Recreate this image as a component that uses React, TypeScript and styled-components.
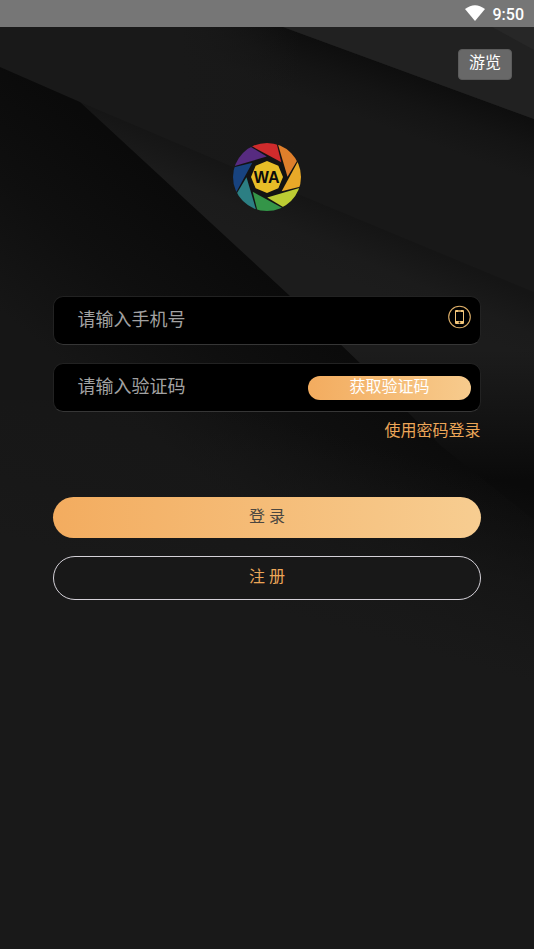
import React from "react";
import styled, { createGlobalStyle } from "styled-components";

const GlobalStyle = createGlobalStyle`
  *, *::before, *::after { box-sizing: border-box; }
  body {
    margin: 0;
    background: #191919;
    font-family: Roboto, "Noto Sans CJK SC", sans-serif;
  }
  button, input { font: inherit; }
`;

const Page = styled.div`
  position: relative;
  isolation: isolate;
  min-height: 100vh;
  display: flex;
  flex-direction: column;
  overflow: hidden;
`;

const BackdropSvg = styled.svg`
  position: absolute;
  z-index: -1;
  inset: 0;
  width: 100%;
  height: 100%;
`;

const StatusBar = styled.header`
  display: flex;
  align-items: center;
  justify-content: flex-end;
  gap: 8px;
  height: 27px;
  padding: 2px 10px 0 0;
  background: #767676;
  color: #fff;
  font-size: 16px;
  font-weight: 500;
  line-height: 24px;
`;

const WifiSvg = styled.svg`
  width: 20px;
  height: 16px;
  margin-bottom: 4px;
`;

const TopActions = styled.nav`
  display: flex;
  justify-content: flex-end;
  padding: 22px 22px 0;
`;

const BrowseButton = styled.button`
  width: 54px;
  height: 31px;
  padding: 0 0 4px;
  border: 1px solid #5c5c5c;
  border-radius: 4px;
  background: #686868;
  color: #fff;
  font-size: 16px;
  line-height: 24px;
  cursor: pointer;
`;

const LogoSvg = styled.svg`
  display: block;
  width: 68px;
  height: 68px;
  margin: 63px auto 0;
`;

const LoginForm = styled.form`
  display: flex;
  flex-direction: column;
  padding: 85px 10% 40px;
`;

const Fields = styled.div`
  display: flex;
  flex-direction: column;
  gap: 18px;
`;

const Field = styled.div`
  display: flex;
  align-items: flex-start;
  height: 49px;
  padding-right: 9px;
  border: 1px solid #222;
  border-bottom-color: #363636;
  border-radius: 10px;
  background: #000;
`;

const TextInput = styled.input`
  flex: 1;
  min-width: 0;
  height: 44px;
  padding: 0 0 0 23px;
  border: 0;
  outline: 0;
  background: transparent;
  color: #fff;
  font-size: 18px;
  &::placeholder { color: #a2a2a2; opacity: 1; }
`;

const PhoneSvg = styled.svg`
  flex: none;
  width: 24px;
  height: 24px;
  margin-top: 8px;
`;

const CodeButton = styled.button`
  flex: none;
  width: 39%;
  height: 24px;
  margin-top: 12px;
  padding: 0 0 2px;
  border: 0;
  border-radius: 12px;
  background: linear-gradient(90deg, #f3ac5f, #f7cb8d);
  color: #fff;
  font-size: 16px;
  line-height: 20px;
  cursor: pointer;
`;

const PasswordLink = styled.a`
  align-self: flex-end;
  margin-top: 7px;
  color: #eca658;
  font-size: 16px;
  line-height: 24px;
  text-decoration: none;
`;

const Actions = styled.div`
  display: flex;
  flex-direction: column;
  gap: 18px;
  margin-top: 54px;
`;

const ActionButton = styled.button<{ $primary?: boolean }>`
  height: ${(p) => (p.$primary ? "41px" : "44px")};
  padding: 0 0 2px;
  border: ${(p) => (p.$primary ? "0" : "1px solid #d4d1d8")};
  border-radius: 22px;
  background: ${(p) => (p.$primary ? "linear-gradient(90deg, #f3ac5f, #f7cd91)" : "#181818")};
  color: ${(p) => (p.$primary ? "#4a4640" : "#eca658")};
  font-size: 16px;
  line-height: 24px;
  cursor: pointer;
`;

const Backdrop = () => (
  <BackdropSvg viewBox="0 0 534 949" preserveAspectRatio="none" aria-hidden="true">
    <defs>
      <linearGradient id="sheetTop" gradientUnits="userSpaceOnUse" x1="408" y1="73" x2="388" y2="128">
        <stop offset="0" stopColor="#0e0e0e" />
        <stop offset="0.5" stopColor="#141414" />
        <stop offset="1" stopColor="#181818" />
      </linearGradient>
      <linearGradient id="sheetTopEdge" gradientUnits="userSpaceOnUse" x1="180" y1="0" x2="300" y2="0">
        <stop offset="0" stopColor="#191919" />
        <stop offset="1" stopColor="#191919" stopOpacity="0" />
      </linearGradient>
      <linearGradient id="sheetMiddle" gradientUnits="userSpaceOnUse" x1="330" y1="207" x2="306" y2="262">
        <stop offset="0" stopColor="#151515" />
        <stop offset="0.6" stopColor="#1b1b1b" />
        <stop offset="1" stopColor="#1c1c1c" />
      </linearGradient>
      <linearGradient id="sheetFade" gradientUnits="userSpaceOnUse" x1="400" y1="350" x2="400" y2="480">
        <stop offset="0" stopColor="#0c0c0c" stopOpacity="0" />
        <stop offset="1" stopColor="#0a0a0a" />
      </linearGradient>
      <linearGradient id="sheetLow" gradientUnits="userSpaceOnUse" x1="190" y1="200" x2="60" y2="360">
        <stop offset="0" stopColor="#0a0a0a" />
        <stop offset="0.5" stopColor="#0f0f0f" />
        <stop offset="1" stopColor="#161616" />
      </linearGradient>
      <linearGradient id="floor" gradientUnits="userSpaceOnUse" x1="320" y1="430" x2="270" y2="610">
        <stop offset="0" stopColor="#191919" stopOpacity="0" />
        <stop offset="0.5" stopColor="#181818" stopOpacity="0.7" />
        <stop offset="1" stopColor="#191919" />
      </linearGradient>
    </defs>
    <rect width="534" height="949" fill="#191919" />
    <path d="M0 27 H283 L534 119 V292 L233 167 L80 102 L0 67 Z" fill="url(#sheetTop)" />
    <path d="M0 27 H320 V205 L80 102 L0 67 Z" fill="url(#sheetTopEdge)" />
    <path d="M283 27 H534 V119 Z" fill="#212121" />
    <path d="M492 27 H534 V50 Z" fill="#272727" />
    <path d="M80 102 L233 167 L534 292 V560 H450 Z" fill="url(#sheetMiddle)" />
    <path d="M80 102 L233 167 L534 292 V560 H450 Z" fill="url(#sheetFade)" />
    <path d="M0 67 L80 102 L290 296 L361 364 L440 445 L534 520 V700 H0 Z" fill="url(#sheetLow)" />
    <rect y="400" width="534" height="549" fill="url(#floor)" />
  </BackdropSvg>
);

const bladeColors = [
  "#cf2b2c",
  "#df7f2b",
  "#e9a928",
  "#bccc33",
  "#349548",
  "#2c7f83",
  "#18437f",
  "#572b80",
];

const Logo = () => (
  <LogoSvg viewBox="-102 -102 204 204" role="img" aria-label="WA">
    <defs>
      <clipPath id="lens">
        <circle r="102" />
      </clipPath>
    </defs>
    <circle r="100" fill="#131313" />
    <g clipPath="url(#lens)">
      {bladeColors.map((color, i) => (
        <path key={color} d="M43 -44 L-56 -98 L-20 -130 L23 -124 Z" fill={color} transform={`rotate(${i * 45})`} />
      ))}
    </g>
    <path d="M0 -48 L34 -34 L48 0 L34 34 L0 48 L-34 34 L-48 0 L-34 -34 Z" fill="#e7bd27" />
    <text
      x="-1"
      y="18"
      textAnchor="middle"
      fontFamily="Liberation Sans, sans-serif"
      fontSize="48"
      fontWeight="700"
      fill="#0b0b0b"
    >
      WA
    </text>
  </LogoSvg>
);

export default function App() {
  return (
    <Page>
      <GlobalStyle />
      <Backdrop />
      <StatusBar>
        <WifiSvg viewBox="0 0 20 16" aria-hidden="true">
          <path d="M0 4 Q10 -3.6 20 4 L10 16 Z" fill="#fff" />
        </WifiSvg>
        <span>9:50</span>
      </StatusBar>
      <TopActions>
        <BrowseButton type="button">游览</BrowseButton>
      </TopActions>
      <main>
        <Logo />
        <LoginForm onSubmit={(e) => e.preventDefault()}>
          <Fields>
            <Field>
              <TextInput type="tel" aria-label="手机号" placeholder="请输入手机号" />
              <PhoneSvg viewBox="0 0 24 24" aria-hidden="true">
                <circle cx="12.5" cy="12" r="10.8" fill="none" stroke="#dcae68" strokeWidth="1.1" />
                <path
                  d="M9 5 H16 Q17 5 17 6 V18 Q17 19 16 19 H9 Q8 19 8 18 V6 Q8 5 9 5 Z M9 7 V16 H16 V7 Z"
                  fill="#f3c67b"
                  fillRule="evenodd"
                />
                <path d="M11 6 H14" stroke="#4b3818" strokeWidth="0.7" />
                <circle cx="12.5" cy="17.5" r="0.9" fill="#201606" />
              </PhoneSvg>
            </Field>
            <Field>
              <TextInput type="text" inputMode="numeric" aria-label="验证码" placeholder="请输入验证码" />
              <CodeButton type="button">获取验证码</CodeButton>
            </Field>
          </Fields>
          <PasswordLink href="#password">使用密码登录</PasswordLink>
          <Actions>
            <ActionButton type="submit" $primary>
              登 录
            </ActionButton>
            <ActionButton type="button">注 册</ActionButton>
          </Actions>
        </LoginForm>
      </main>
    </Page>
  );
}
